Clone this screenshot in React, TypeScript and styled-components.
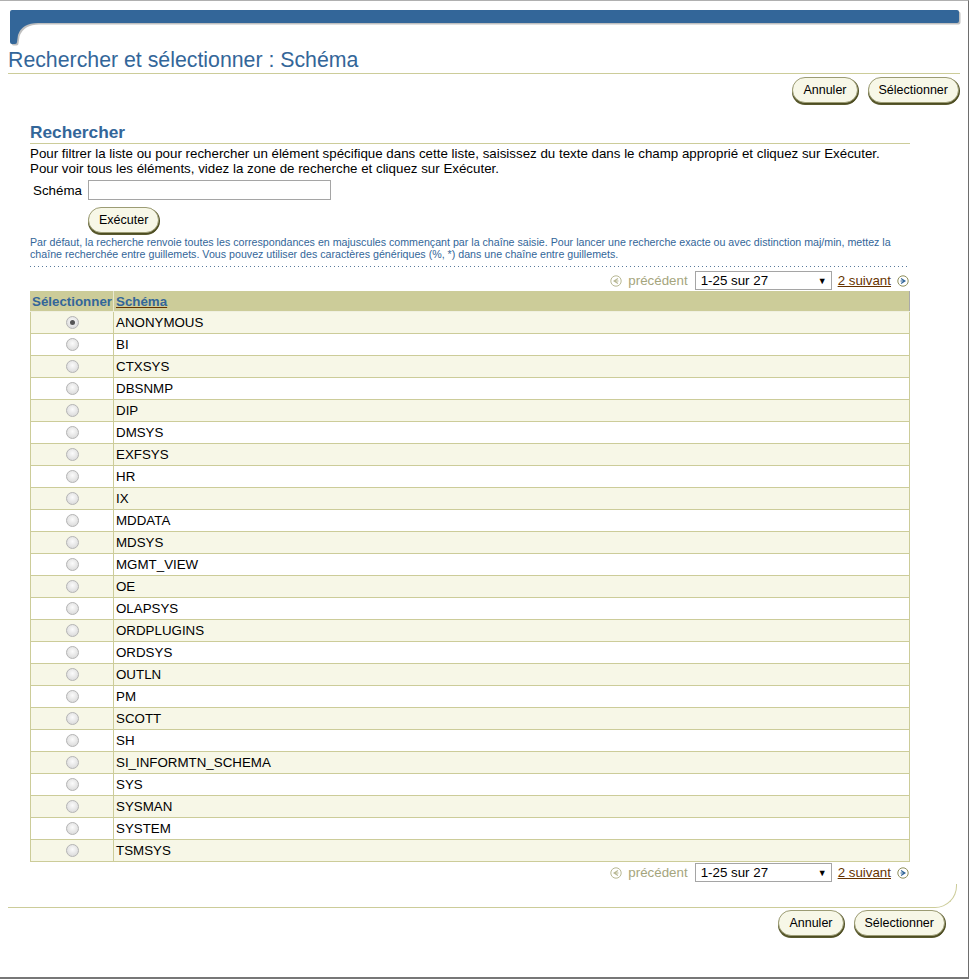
import styled, { createGlobalStyle } from "styled-components";

const GlobalStyle = createGlobalStyle`
  html, body {
    margin: 0;
    padding: 0;
    background: #ffffff;
    font-family: "Liberation Sans", Arial, sans-serif;
  }
`;

const schemas = [
  "ANONYMOUS", "BI", "CTXSYS", "DBSNMP", "DIP", "DMSYS", "EXFSYS", "HR", "IX",
  "MDDATA", "MDSYS", "MGMT_VIEW", "OE", "OLAPSYS", "ORDPLUGINS", "ORDSYS",
  "OUTLN", "PM", "SCOTT", "SH", "SI_INFORMTN_SCHEMA", "SYS", "SYSMAN", "SYSTEM",
  "TSMSYS",
];

// fenetre du popup
const Window = styled.div`
  box-sizing: border-box;
  width: 969px;
  height: 979px;
  border-top: 1px solid #b0b0b0;
  border-right: 1px solid #6e6e6e;
  border-bottom: 2px solid #777;
  background: #fff;
  overflow: hidden;
`;

const Banner = styled.div`
  height: 47px;
`;

const PageTitle = styled.h1`
  margin: 0 8px;
  padding-bottom: 1px;
  font-size: 21.3px;
  line-height: 24px;
  font-weight: normal;
  color: #336699;
  border-bottom: 1px solid #cccc99;
`;

const ButtonBar = styled.div<{ $right: number; $top: number }>`
  display: flex;
  justify-content: flex-end;
  gap: 10px;
  margin-top: ${(p) => p.$top}px;
  padding-right: ${(p) => p.$right}px;
`;

const Button = styled.button`
  box-sizing: border-box;
  height: 26px;
  padding: 0 10px;
  border: 1px solid #9c9c74;
  border-radius: 13px;
  background: #f7f7e7;
  box-shadow: 1px 1px 0 #4d4d22, 0 2px 0 #5a5a2e;
  font-family: "Liberation Sans", Arial, sans-serif;
  font-size: 12.5px;
  color: #000;
  cursor: pointer;
`;

const Content = styled.div`
  margin-left: 30px;
  width: 880px;
`;

const SectionTitle = styled.h2`
  margin: 19px 0 0;
  padding-bottom: 1px;
  font-size: 17.3px;
  line-height: 20px;
  font-weight: bold;
  color: #336699;
  border-bottom: 1px solid #cccc99;
`;

const Instructions = styled.div`
  margin-top: 2px;
  font-size: 13.33px;
  line-height: 15px;
  color: #000;
`;

const FieldRow = styled.div`
  display: flex;
  align-items: center;
  gap: 6px;
  margin-top: 4px;
  padding-left: 3px;
  font-size: 13.33px;
`;

const TextInput = styled.input`
  box-sizing: border-box;
  width: 243px;
  height: 20px;
  border: 1px solid #a5a5a5;
  margin: 0;
`;

const RunRow = styled.div`
  margin-top: 7px;
  padding-left: 58px;
`;

const Hint = styled.div`
  max-width: 872px;
  margin-top: 3px;
  font-size: 10.67px;
  line-height: 12px;
  color: #336699;
`;

const Dotted = styled.div`
  height: 1px;
  margin-top: 6px;
  background-image: linear-gradient(to right, #587a9c 1px, transparent 1px);
  background-size: 4px 1px;
`;

const Pager = styled.div<{ $top: number }>`
  display: flex;
  justify-content: flex-end;
  align-items: center;
  gap: 6px;
  margin-top: ${(p) => p.$top}px;
  padding-right: 1px;
  height: 19px;
  font-size: 13.33px;
`;

const PrevLabel = styled.span`
  color: #a5a57d;
  margin-right: 1px;
`;

const FakeSelect = styled.div`
  box-sizing: border-box;
  display: flex;
  justify-content: space-between;
  align-items: center;
  width: 137px;
  height: 19px;
  padding: 0 4px 0 5px;
  border: 1px solid #a5a5a5;
  font-size: 13.33px;
  color: #000;

  span {
    font-size: 9px;
  }
`;

const NextLink = styled.a`
  color: #663300;
  text-decoration: underline;
  cursor: pointer;
`;

const Table = styled.table`
  width: 880px;
  border-collapse: collapse;
  margin-top: 1px;
  font-size: 13.33px;
`;

const HeadCell = styled.th<{ $w?: number }>`
  width: ${(p) => (p.$w ? `${p.$w}px` : "auto")};
  height: 19px;
  padding: 0 1px;
  background: #cccc99;
  border: 1px solid #cccc99;
  border-right: 1px solid #e8e8d0;
  border-bottom: 1px solid #f0f0e0;
  text-align: left;
  font-weight: bold;
  color: #336699;

  &:last-child {
    border-right: 1px solid #a9a9a9;
    padding-left: 2px;
  }
`;

const SortLink = styled.a`
  color: #336699;
  text-decoration: underline;
  text-decoration-color: #663300;
`;

const Row = styled.tr<{ $odd: boolean }>`
  background: ${(p) => (p.$odd ? "#f7f7e7" : "#ffffff")};
`;

const Cell = styled.td<{ $center?: boolean }>`
  height: 21px;
  padding: 0 2px;
  border: 1px solid #cccc99;
  text-align: ${(p) => (p.$center ? "center" : "left")};
  vertical-align: middle;
  color: #000;
`;

const Radio = styled.span<{ $checked: boolean }>`
  display: inline-block;
  box-sizing: border-box;
  width: 13px;
  height: 13px;
  margin-top: 2px;
  border-radius: 50%;
  border: 1px solid #b5b5b5;
  background: radial-gradient(circle at 50% 40%, #fbfbfb 0%, #e3e3e3 60%, #d2d2d2 100%);
  position: relative;

  &::after {
    content: "";
    display: ${(p) => (p.$checked ? "block" : "none")};
    position: absolute;
    left: 3px;
    top: 3px;
    width: 5px;
    height: 5px;
    border-radius: 50%;
    background: #555;
  }
`;

const FooterRule = styled.div`
  box-sizing: border-box;
  height: 24px;
  margin: 2px 11px 0 8px;
  border-bottom: 1px solid #cccc99;
  border-right: 1px solid #cccc99;
  border-bottom-right-radius: 22px;
`;

function NavArrow({ next }: { next?: boolean }) {
  const ring = next ? "#8f8f5c" : "#b8b894";
  const ink = next ? "#336699" : "#b8b894";
  return (
    <svg width="12" height="12" viewBox="0 0 12 12">
      <circle cx="6" cy="6" r="5.2" fill="#fff" stroke={ring} strokeWidth="1" />
      {next ? (
        <path d="M4 3.5 L8 6 L4 8.5 M3.5 6 H7.5" fill="none" stroke={ink} strokeWidth="1.1" />
      ) : (
        <path d="M8 3.5 L4 6 L8 8.5 M8.5 6 H4.5" fill="none" stroke={ink} strokeWidth="1.1" />
      )}
    </svg>
  );
}

function PagerBar({ top }: { top: number }) {
  return (
    <Pager $top={top}>
      <NavArrow />
      <PrevLabel>précédent</PrevLabel>
      <FakeSelect>
        1-25 sur 27<span>▼</span>
      </FakeSelect>
      <NextLink>2 suivant</NextLink>
      <NavArrow next />
    </Pager>
  );
}

function BannerArt() {
  const d =
    "M12,9 H957 Q959,9 959,11 V20 Q959,22 957,22 H38 Q22,22 18,34 L17,41 Q17,43 15,43 H12 Q10,43 10,41 V11 Q10,9 12,9 Z";
  return (
    <svg width="969" height="47" viewBox="0 0 969 47">
      <path d={d} fill="#8a8a8a" opacity="0.55" transform="translate(1.5,1.5)" />
      <path d={d} fill="#336699" />
    </svg>
  );
}

export default function App() {
  return (
    <>
      <GlobalStyle />
      <Window>
        <Banner>
          <BannerArt />
        </Banner>
        <PageTitle>Rechercher et sélectionner : Schéma</PageTitle>
        <ButtonBar $top={3} $right={9}>
          <Button>Annuler</Button>
          <Button>Sélectionner</Button>
        </ButtonBar>

        <Content>
          <SectionTitle>Rechercher</SectionTitle>
          <Instructions>
            <div>
              Pour filtrer la liste ou pour rechercher un élément spécifique dans cette liste,
              saisissez du texte dans le champ approprié et cliquez sur Exécuter.
            </div>
            <div>Pour voir tous les éléments, videz la zone de recherche et cliquez sur Exécuter.</div>
          </Instructions>
          <FieldRow>
            <label>Schéma</label>
            <TextInput type="text" />
          </FieldRow>
          <RunRow>
            <Button>Exécuter</Button>
          </RunRow>
          <Hint>
            Par défaut, la recherche renvoie toutes les correspondances en majuscules commençant
            par la chaîne saisie. Pour lancer une recherche exacte ou avec distinction maj/min,
            mettez la chaîne recherchée entre guillemets. Vous pouvez utiliser des caractères
            génériques (%, *) dans une chaîne entre guillemets.
          </Hint>
          <Dotted />
          <PagerBar top={4} />
          <Table>
            <thead>
              <tr>
                <HeadCell $w={79}>Sélectionner</HeadCell>
                <HeadCell>
                  <SortLink>Schéma</SortLink>
                </HeadCell>
              </tr>
            </thead>
            <tbody>
              {schemas.map((s, i) => (
                <Row key={s} $odd={i % 2 === 0}>
                  <Cell $center>
                    <Radio $checked={i === 0} />
                  </Cell>
                  <Cell>{s}</Cell>
                </Row>
              ))}
            </tbody>
          </Table>
          <PagerBar top={1} />
        </Content>

        <FooterRule />
        <ButtonBar $top={2} $right={23}>
          <Button>Annuler</Button>
          <Button>Sélectionner</Button>
        </ButtonBar>
      </Window>
    </>
  );
}
